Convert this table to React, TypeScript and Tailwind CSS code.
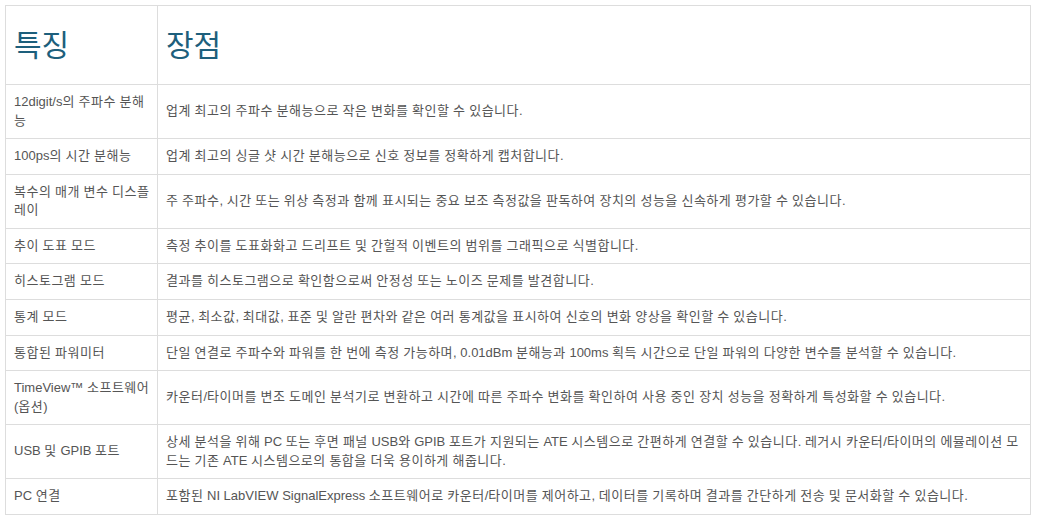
import React from "react";

const rows: [string, string][] = [
  ["12digit/s의 주파수 분해능", "업계 최고의 주파수 분해능으로 작은 변화를 확인할 수 있습니다."],
  ["100ps의 시간 분해능", "업계 최고의 싱글 샷 시간 분해능으로 신호 정보를 정확하게 캡처합니다."],
  ["복수의 매개 변수 디스플레이", "주 주파수, 시간 또는 위상 측정과 함께 표시되는 중요 보조 측정값을 판독하여 장치의 성능을 신속하게 평가할 수 있습니다."],
  ["추이 도표 모드", "측정 추이를 도표화화고 드리프트 및 간헐적 이벤트의 범위를 그래픽으로 식별합니다."],
  ["히스토그램 모드", "결과를 히스토그램으로 확인함으로써 안정성 또는 노이즈 문제를 발견합니다."],
  ["통계 모드", "평균, 최소값, 최대값, 표준 및 알란 편차와 같은 여러 통계값을 표시하여 신호의 변화 양상을 확인할 수 있습니다."],
  ["통합된 파워미터", "단일 연결로 주파수와 파워를 한 번에 측정 가능하며, 0.01dBm 분해능과 100ms 획득 시간으로 단일 파워의 다양한 변수를 분석할 수 있습니다."],
  ["TimeView™ 소프트웨어 (옵션)", "카운터/타이머를 변조 도메인 분석기로 변환하고 시간에 따른 주파수 변화를 확인하여 사용 중인 장치 성능을 정확하게 특성화할 수 있습니다."],
  ["USB 및 GPIB 포트", "상세 분석을 위해 PC 또는 후면 패널 USB와 GPIB 포트가 지원되는 ATE 시스템으로 간편하게 연결할 수 있습니다. 레거시 카운터/타이머의 에뮬레이션 모드는 기존 ATE 시스템으로의 통합을 더욱 용이하게 해줍니다."],
  ["PC 연결", "포함된 NI LabVIEW SignalExpress 소프트웨어로 카운터/타이머를 제어하고, 데이터를 기록하며 결과를 간단하게 전송 및 문서화할 수 있습니다."],
];

function K({ text }: { text: string }) {
  const parts = text.split(/([\uAC00-\uD7A3]+)/);
  return (
    <>
      {parts.map((p, i) =>
        /[\uAC00-\uD7A3]/.test(p) ? (
          <span key={i} className="tracking-[0.5px]">
            {p}
          </span>
        ) : (
          <React.Fragment key={i}>{p}</React.Fragment>
        )
      )}
    </>
  );
}

export default function App() {
  return (
    <div
      className="w-[1037px] h-[526px] bg-white pt-[5px] pl-[5px] pr-[6px]"
      style={{ fontFamily: '"Liberation Sans", "Noto Sans CJK KR", sans-serif' }}
    >
      <table className="w-[1026px] border-collapse border border-[#dddddd] text-[13px] leading-[18.57px] text-[#555555]">
        <colgroup>
          <col className="w-[152px]" />
          <col />
        </colgroup>
        <thead>
          <tr>
            <th className="border border-[#dddddd] px-2 h-[79px] text-left align-middle font-normal text-[30px] leading-[33px] text-[#1d5f7c]">
              특징
            </th>
            <th className="border border-[#dddddd] px-2 h-[79px] text-left align-middle font-normal text-[30px] leading-[33px] text-[#1d5f7c]">
              장점
            </th>
          </tr>
        </thead>
        <tbody>
          {rows.map(([a, b], i) => (
            <tr key={i}>
              <td className="border border-[#dddddd] py-2 pl-2 pr-[5px] align-middle">
                <K text={a} />
              </td>
              <td className="border border-[#dddddd] py-2 pl-2 pr-[6px] align-middle">
                <K text={b} />
              </td>
            </tr>
          ))}
        </tbody>
      </table>
    </div>
  );
}
